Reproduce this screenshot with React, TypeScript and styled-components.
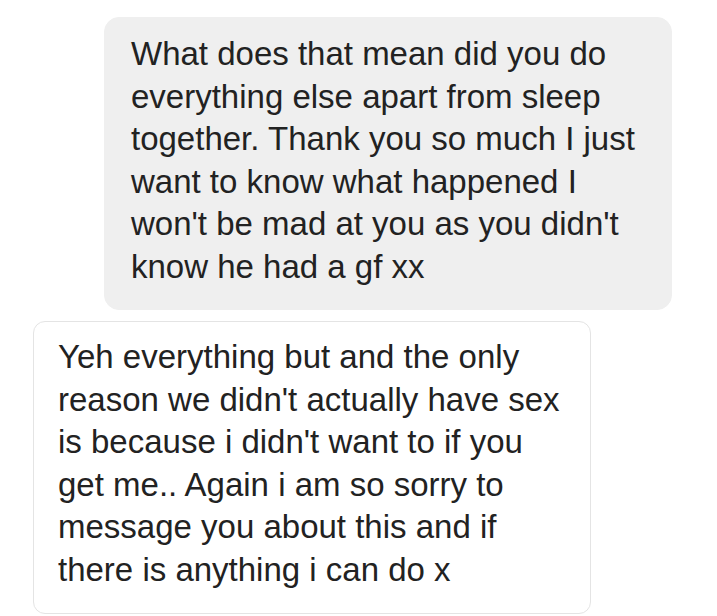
import styled, { createGlobalStyle } from 'styled-components'

const GlobalStyle = createGlobalStyle`
  html, body {
    margin: 0;
    padding: 0;
    background: #ffffff;
  }
`

const sentLines = [
  'What does that mean did you do',
  'everything else apart from sleep',
  'together. Thank you so much I just',
  'want to know what happened I',
  "won't be mad at you as you didn't",
  'know he had a gf xx',
]

const receivedLines = [
  'Yeh everything but and the only',
  "reason we didn't actually have sex",
  "is because i didn't want to if you",
  'get me.. Again i am so sorry to',
  'message you about this and if',
  'there is anything i can do x',
]

const App = () => {
  return (
    <>
      <GlobalStyle />
      <Thread>
        <Bubble $sent>
          {sentLines.map((line) => (
            <Line key={line}>{line}</Line>
          ))}
        </Bubble>
        <Bubble>
          {receivedLines.map((line) => (
            <Line key={line}>{line}</Line>
          ))}
        </Bubble>
      </Thread>
    </>
  )
}

const Thread = styled.div`
  display: flex;
  flex-direction: column;
  align-items: flex-start;
  gap: 11px;
  padding-top: 17px;
  height: 616px;
  box-sizing: border-box;
  overflow: hidden;
  font-family: 'Liberation Sans', Arial, sans-serif;
`

const Bubble = styled.div<{ $sent?: boolean }>`
  box-sizing: border-box;
  margin-left: ${(p) => (p.$sent ? '104px' : '33px')};
  width: ${(p) => (p.$sent ? '568px' : '558px')};
  padding: ${(p) => (p.$sent ? '15px 20px 21px 26px' : '14px 20px 22px 24px')};
  background: ${(p) => (p.$sent ? '#efefef' : '#ffffff')};
  border: 1px solid ${(p) => (p.$sent ? '#efefef' : '#e4e4e4')};
  border-radius: ${(p) => (p.$sent ? '15px' : '12px')};
  color: #222222;
  font-size: 33px;
  line-height: 42.5px;
`

const Line = styled.span`
  display: block;
  white-space: nowrap;
`

export default App
